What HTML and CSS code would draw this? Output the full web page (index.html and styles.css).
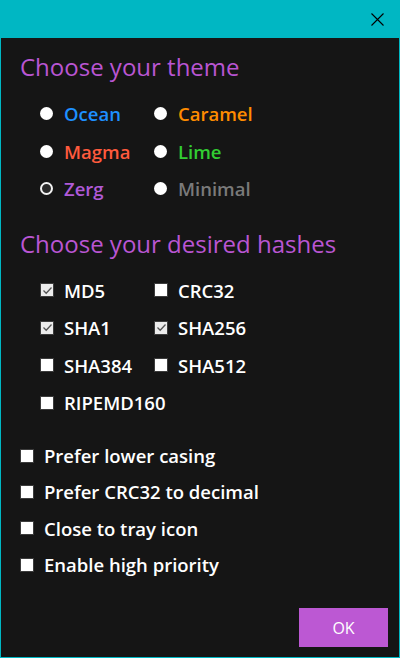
FILE: index.html
```html
<!DOCTYPE html>
<html lang="en">
<head>
    <meta charset="UTF-8">
    <title>Settings</title>
    <link rel="stylesheet" href="styles.css">
</head>
<body>
<div class="window">
    <!--标题栏-->
    <div class="titlebar">
        <span class="close">
            <svg width="13" height="13" viewBox="0 0 13 13"><path d="M0.5 0.5L12.5 12.5M12.5 0.5L0.5 12.5" stroke="#000" stroke-width="1.1"/></svg>
        </span>
    </div>
    <div class="content">
        <h2 class="heading">Choose your theme</h2>
        <div class="grid themes">
            <label class="item"><span class="radio"></span><span class="ocean">Ocean</span></label>
            <label class="item"><span class="radio"></span><span class="caramel">Caramel</span></label>
            <label class="item"><span class="radio"></span><span class="magma">Magma</span></label>
            <label class="item"><span class="radio"></span><span class="lime">Lime</span></label>
            <label class="item"><span class="radio on"></span><span class="zerg">Zerg</span></label>
            <label class="item"><span class="radio"></span><span class="minimal">Minimal</span></label>
        </div>

        <h2 class="heading second">Choose your desired hashes</h2>
        <div class="grid hashes">
            <label class="item"><span class="box on"><svg width="11" height="11" viewBox="0 0 11 11"><path d="M1.5 5.5L4.2 8.2L9.5 2.5" fill="none" stroke="#555" stroke-width="1.3"/></svg></span>MD5</label>
            <label class="item"><span class="box"></span>CRC32</label>
            <label class="item"><span class="box on"><svg width="11" height="11" viewBox="0 0 11 11"><path d="M1.5 5.5L4.2 8.2L9.5 2.5" fill="none" stroke="#555" stroke-width="1.3"/></svg></span>SHA1</label>
            <label class="item"><span class="box on"><svg width="11" height="11" viewBox="0 0 11 11"><path d="M1.5 5.5L4.2 8.2L9.5 2.5" fill="none" stroke="#555" stroke-width="1.3"/></svg></span>SHA256</label>
            <label class="item"><span class="box"></span>SHA384</label>
            <label class="item"><span class="box"></span>SHA512</label>
            <label class="item"><span class="box"></span>RIPEMD160</label>
        </div>

        <div class="options">
            <label class="item"><span class="box"></span>Prefer lower casing</label>
            <label class="item"><span class="box"></span>Prefer CRC32 to decimal</label>
            <label class="item"><span class="box"></span>Close to tray icon</label>
            <label class="item"><span class="box"></span>Enable high priority</label>
        </div>

        <div class="footer">
            <button class="ok">OK</button>
        </div>
    </div>
</div>
</body>
</html>
```

FILE: styles.css
```css
* {
    margin: 0;
    padding: 0;
    box-sizing: border-box;
}

body {
    background-color: #00b7c3;
    font-family: "Open Sans", "Noto Sans", sans-serif;
}

.window {
    width: 400px;
    height: 658px;
    border: 1px solid #00b7c3;
    border-top: 0;
    display: flex;
    flex-direction: column;
}

.titlebar {
    height: 38px;
    background-color: #00b7c3;
    display: flex;
    justify-content: flex-end;
    align-items: flex-start;
}

.close {
    display: block;
    width: 13px;
    height: 13px;
    margin: 13px 15px 0 0;
}

.close svg {
    display: block;
}

.content {
    flex: 1;
    background-color: #151515;
    padding: 0 0 0 19px;
    display: flex;
    flex-direction: column;
}

.heading {
    font-size: 24px;
    font-weight: normal;
    color: #ba55d3;
    line-height: 32px;
    margin-top: 13px;
}

.heading.second {
    margin-top: 20px;
}

.grid {
    display: grid;
    grid-template-columns: 114px 114px;
    grid-auto-rows: 37.5px;
    padding-left: 20px;
    margin-top: 12px;
}

.item {
    display: flex;
    align-items: center;
    font-size: 18.5px;
    font-weight: 600;
    color: #fff;
}

.radio {
    width: 13px;
    height: 13px;
    border-radius: 50%;
    background-color: #fff;
    margin-right: 11px;
    flex: none;
}

.radio.on {
    background-color: #2a2a2a;
    border: 2px solid #f2f2f2;
}

.box {
    width: 14px;
    height: 14px;
    background-color: #fff;
    border: 1px solid #3c3c3c;
    margin-right: 10px;
    flex: none;
    display: flex;
    align-items: center;
    justify-content: center;
}

.box.on {
    background-color: #ececec;
}

.ocean { color: #1e90ff; }
.caramel { color: #ff8c00; }
.magma { color: #ff5a3d; }
.lime { color: #32cd32; }
.zerg { color: #b05ad8; }
.minimal { color: #7a7a7a; }

.options {
    margin-top: 16px;
    display: flex;
    flex-direction: column;
}

.options .item {
    height: 36.3px;
}

.footer {
    margin-top: auto;
    display: flex;
    justify-content: flex-end;
    padding: 0 11px 10px 0;
}

.ok {
    width: 89px;
    height: 39px;
    border: 0;
    background-color: #bc58d3;
    color: #fff;
    font-family: "Open Sans", "Noto Sans", sans-serif;
    font-size: 16px;
}
```
